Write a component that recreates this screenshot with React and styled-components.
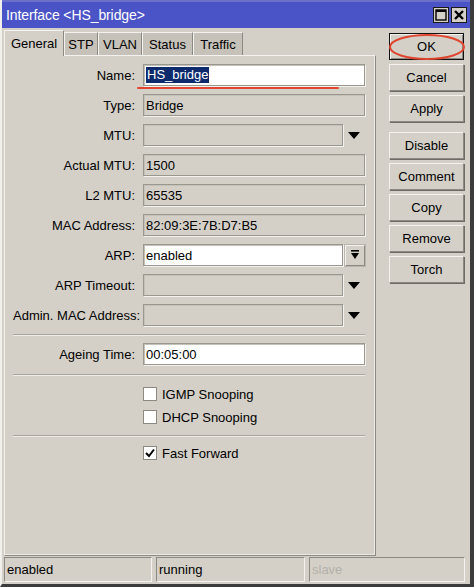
import React from "react";
import styled, { createGlobalStyle } from "styled-components";

const GlobalStyle = createGlobalStyle`
  html, body {
    margin: 0;
    padding: 0;
    background: #d4d0c8;
  }
  * {
    box-sizing: border-box;
  }
`;

const Window = styled.div`
  width: 474px;
  height: 587px;
  display: flex;
  flex-direction: column;
  background: #d4d0c8;
  border-left: 2px solid #f2f0ea;
  border-right: 4px solid #3c3c3c;
  border-bottom: 3px solid #3c3c3c;
  font-family: "Liberation Sans", Arial, sans-serif;
  font-size: 12.5px;
  color: #000;
  overflow: hidden;
`;

const TitleBar = styled.div`
  height: 28px;
  flex: none;
  display: flex;
  align-items: center;
  justify-content: space-between;
  background: #4b54c6;
  border-top: 2px solid #6a70c8;
  padding: 0 3px 0 4px;
`;

const Title = styled.span`
  color: #fff;
  font-size: 14px;
  letter-spacing: -0.1px;
`;

const TitleButtons = styled.div`
  display: flex;
  gap: 2px;
`;

const TitleButton = styled.div`
  width: 16px;
  height: 16px;
  background: #d4d0c8;
  border: 1px solid #1a1a1a;
  display: flex;
  align-items: center;
  justify-content: center;
`;

const Body = styled.div`
  flex: 1;
  display: flex;
  padding: 1px 0 0 2px;
`;

const LeftColumn = styled.div`
  width: 372px;
  display: flex;
  flex-direction: column;
`;

const TabRow = styled.div`
  height: 26px;
  display: flex;
  align-items: flex-end;
`;

const Tab = styled.div`
  height: ${(p) => (p.$active ? "26px" : "23px")};
  width: ${(p) => p.$w}px;
  display: flex;
  align-items: center;
  justify-content: center;
  background: ${(p) => (p.$active ? "#d4d0c8" : "#c6c2ba")};
  border-top: 1px solid #f4f2ee;
  border-left: 1px solid #f4f2ee;
  border-right: 1px solid #8c8983;
  font-size: 13px;
  position: relative;
  z-index: ${(p) => (p.$active ? 1 : 0)};
  margin-bottom: ${(p) => (p.$active ? "-1px" : "0")};
`;

const Panel = styled.div`
  height: 501px;
  border-top: 1px solid #f4f2ee;
  border-left: 1px solid #f4f2ee;
  border-right: 1px solid #8c8983;
  border-bottom: 1px solid #8c8983;
  box-shadow: inset -1px -1px 0 #eceae4;
  padding: 8px 0 0 8px;
  display: flex;
  flex-direction: column;
  position: relative;
`;

const FormRow = styled.div`
  display: grid;
  grid-template-columns: 122px 222px;
  column-gap: 8px;
  align-items: center;
  height: 22px;
  margin-bottom: ${(p) => p.$mb ?? 8}px;
`;

const Label = styled.span`
  text-align: right;
  white-space: nowrap;
  font-size: 13px;
`;

const FieldWrap = styled.div`
  display: flex;
  align-items: center;
  height: 22px;
`;

const Field = styled.div`
  height: 22px;
  width: ${(p) => (p.$short ? "200px" : "222px")};
  background: ${(p) => (p.$editable ? "#ffffff" : "#d4d0c8")};
  border: 1px solid #9a978f;
  box-shadow: inset 1px 1px 0 #c4c1b9, 1px 1px 0 #f4f2ee;
  display: flex;
  align-items: center;
  padding-left: 2px;
  font-size: 13px;
  white-space: nowrap;
`;

const Selected = styled.span`
  background: #0c2a6c;
  color: #fff;
  padding: 0 1px;
  line-height: 16px;
`;

const ArrowSlot = styled.div`
  width: 22px;
  height: 22px;
  display: flex;
  align-items: center;
  justify-content: center;
`;

const DropButton = styled.div`
  width: 20px;
  height: 21px;
  margin-left: 2px;
  border: 1px solid #8c8983;
  border-top-color: #f4f2ee;
  border-left-color: #f4f2ee;
  box-shadow: 0 0 0 1px #b8b5ad;
  display: flex;
  align-items: center;
  justify-content: center;
`;

const Separator = styled.div`
  width: 352px;
  border-top: 1px solid #a9a69f;
  border-bottom: 1px solid #eeece6;
  margin-bottom: ${(p) => p.$mb}px;
`;

const CheckRow = styled.label`
  display: flex;
  align-items: center;
  gap: 5px;
  height: 18px;
  padding-left: 130px;
  margin-bottom: ${(p) => p.$mb ?? 0}px;
  font-size: 13px;
`;

const CheckBox = styled.span`
  width: 14px;
  height: 14px;
  background: #fff;
  border: 1px solid #8c8983;
  display: flex;
  align-items: center;
  justify-content: center;
`;

const RightColumn = styled.div`
  display: flex;
  flex-direction: column;
  padding: 4px 0 0 13px;
`;

const Button = styled.div`
  width: 75px;
  height: 27px;
  display: flex;
  align-items: center;
  justify-content: center;
  font-size: 13px;
  background: #d4d0c8;
  border: 1px solid ${(p) => (p.$default ? "#111" : "#8c8983")};
  border-top-color: ${(p) => (p.$default ? "#111" : "#f4f2ee")};
  border-left-color: ${(p) => (p.$default ? "#111" : "#f4f2ee")};
  box-shadow: ${(p) =>
    p.$default ? "inset 1px 1px 0 #f4f2ee, inset -1px -1px 0 #8c8983" : "1px 1px 0 #6e6b66"};
  margin-bottom: ${(p) => p.$mb ?? 4}px;
  position: relative;
`;

const Ellipse = styled.svg`
  position: absolute;
  left: -4px;
  top: -2px;
  pointer-events: none;
`;

const Underline = styled.div`
  position: absolute;
  left: 132px;
  top: 31px;
  width: 202px;
  height: 2px;
  background: #e0452f;
  border-radius: 1px;
`;

const StatusBar = styled.div`
  height: 28px;
  flex: none;
  display: flex;
  gap: 4px;
  padding: 1px 5px 2px 2px;
`;

const StatusCell = styled.div`
  width: ${(p) => p.$w}px;
  height: 25px;
  border: 1px solid #f4f2ee;
  border-top-color: #8c8983;
  border-left-color: #8c8983;
  display: flex;
  align-items: center;
  padding-left: 2px;
  font-size: 13px;
  color: ${(p) => (p.$muted ? "#b4b1aa" : "#000")};
`;

const DownTriangle = () => (
  <svg width="12" height="7" viewBox="0 0 12 7">
    <path d="M0 0 H12 L6 7 Z" fill="#000" />
  </svg>
);

const rows = [
  { label: "Type:", value: "Bridge" },
  { label: "MTU:", value: "", arrow: true },
  { label: "Actual MTU:", value: "1500" },
  { label: "L2 MTU:", value: "65535" },
  { label: "MAC Address:", value: "82:09:3E:7B:D7:B5" },
];

const tabs = [
  { name: "General", w: 60 },
  { name: "STP", w: 34 },
  { name: "VLAN", w: 44 },
  { name: "Status", w: 51 },
  { name: "Traffic", w: 50 },
];

const buttons = [
  { name: "Cancel" },
  { name: "Apply", mb: 10 },
  { name: "Disable" },
  { name: "Comment" },
  { name: "Copy" },
  { name: "Remove" },
  { name: "Torch" },
];

export default function App() {
  return (
    <>
      <GlobalStyle />
      <Window>
        <TitleBar>
          <Title>Interface &lt;HS_bridge&gt;</Title>
          <TitleButtons>
            <TitleButton>
              <svg width="12" height="12" viewBox="0 0 12 12">
                <rect x="1" y="1" width="10" height="10" fill="none" stroke="#000" strokeWidth="1.4" />
                <line x1="1" y1="2" x2="11" y2="2" stroke="#000" strokeWidth="2" />
              </svg>
            </TitleButton>
            <TitleButton>
              <svg width="12" height="12" viewBox="0 0 12 12">
                <path d="M2 2 L10 10 M10 2 L2 10" stroke="#000" strokeWidth="2.4" />
              </svg>
            </TitleButton>
          </TitleButtons>
        </TitleBar>
        <Body>
          <LeftColumn>
            <TabRow>
              {tabs.map((t, i) => (
                <Tab key={t.name} $w={t.w} $active={i === 0}>
                  {t.name}
                </Tab>
              ))}
            </TabRow>
            <Panel>
              <FormRow>
                <Label>Name:</Label>
                <Field $editable>
                  <Selected>HS_bridge</Selected>
                </Field>
              </FormRow>
              <Underline />
              {rows.map((r) => (
                <FormRow key={r.label}>
                  <Label>{r.label}</Label>
                  <FieldWrap>
                    <Field $short={r.arrow}>{r.value}</Field>
                    {r.arrow && (
                      <ArrowSlot>
                        <DownTriangle />
                      </ArrowSlot>
                    )}
                  </FieldWrap>
                </FormRow>
              ))}
              <FormRow>
                <Label>ARP:</Label>
                <FieldWrap>
                  <Field $short $editable>enabled</Field>
                  <DropButton>
                    <svg width="10" height="10" viewBox="0 0 10 10">
                      <rect x="1" y="0" width="8" height="1.6" fill="#000" />
                      <path d="M1 3 H9 L5 9 Z" fill="#000" />
                    </svg>
                  </DropButton>
                </FieldWrap>
              </FormRow>
              <FormRow>
                <Label>ARP Timeout:</Label>
                <FieldWrap>
                  <Field $short />
                  <ArrowSlot>
                    <DownTriangle />
                  </ArrowSlot>
                </FieldWrap>
              </FormRow>
              <FormRow $mb={8}>
                <Label>Admin. MAC Address:</Label>
                <FieldWrap>
                  <Field $short />
                  <ArrowSlot>
                    <DownTriangle />
                  </ArrowSlot>
                </FieldWrap>
              </FormRow>
              <Separator $mb={7} />
              <FormRow $mb={9}>
                <Label>Ageing Time:</Label>
                <Field $editable>00:05:00</Field>
              </FormRow>
              <Separator $mb={9} />
              <CheckRow $mb={5}>
                <CheckBox />
                IGMP Snooping
              </CheckRow>
              <CheckRow $mb={9}>
                <CheckBox />
                DHCP Snooping
              </CheckRow>
              <Separator $mb={7} />
              <CheckRow>
                <CheckBox>
                  <svg width="10" height="10" viewBox="0 0 10 10">
                    <path d="M1 5 L4 8 L9 1.5" fill="none" stroke="#000" strokeWidth="2" />
                  </svg>
                </CheckBox>
                Fast Forward
              </CheckRow>
            </Panel>
          </LeftColumn>
          <RightColumn>
            <Button $default>
              OK
              <Ellipse width="82" height="30" viewBox="0 0 82 30">
                <ellipse cx="41" cy="15" rx="37" ry="12" fill="none" stroke="#e0452f" strokeWidth="2" />
              </Ellipse>
            </Button>
            {buttons.map((b) => (
              <Button key={b.name} $mb={b.mb}>
                {b.name}
              </Button>
            ))}
          </RightColumn>
        </Body>
        <StatusBar>
          <StatusCell $w={148}>enabled</StatusCell>
          <StatusCell $w={149}>running</StatusCell>
          <StatusCell $w={156} $muted>slave</StatusCell>
        </StatusBar>
      </Window>
    </>
  );
}
